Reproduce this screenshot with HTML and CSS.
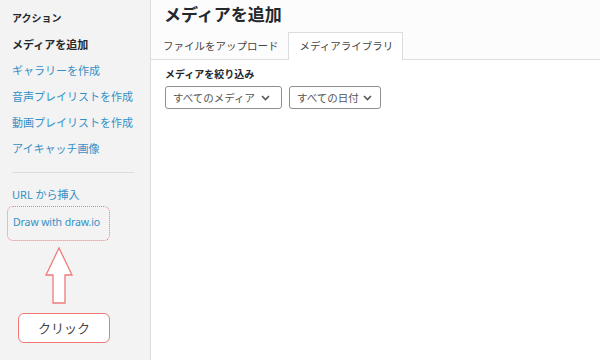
FILE: index.html
```html
<!DOCTYPE html>
<html lang="ja">
<head>
    <meta charset="UTF-8">
    <title>メディアを追加</title>
    <link rel="stylesheet" href="styles.css">
</head>
<body>
    <div class="modal">
        <div class="sidebar">
            <h2 class="menu-title">アクション</h2>
            <ul class="menu">
                <li class="active">メディアを追加</li>
                <li><a href="#">ギャラリーを作成</a></li>
                <li><a href="#">音声プレイリストを作成</a></li>
                <li><a href="#">動画プレイリストを作成</a></li>
                <li><a href="#">アイキャッチ画像</a></li>
            </ul>
            <div class="separator"></div>
            <ul class="menu">
                <li class="url"><a href="#">URL から挿入</a></li>
                <li class="drawio"><a href="#">Draw with draw.io</a></li>
            </ul>

            <!-- annotation -->
            <div class="hint">
                <svg class="arrow" width="30" height="57" viewBox="0 0 30 57">
                    <path d="M15 1 L28 28 L21 28 L21 56 L9 56 L9 28 L2 28 Z" fill="#fff" stroke="#f07a7a" stroke-width="1.3" stroke-linejoin="miter"/>
                </svg>
                <div class="click">クリック</div>
            </div>
        </div>

        <div class="content">
            <div class="header">
                <h1>メディアを追加</h1>
                <div class="tabs">
                    <a class="tab" href="#">ファイルをアップロード</a>
                    <a class="tab active" href="#">メディアライブラリ</a>
                </div>
            </div>
            <div class="toolbar">
                <h3>メディアを絞り込み</h3>
                <div class="filters">
                    <div class="select wide">すべてのメディア
                        <svg width="9" height="6" viewBox="0 0 9 6"><path d="M1 1 L4.5 4.5 L8 1" fill="none" stroke="#555" stroke-width="1.6"/></svg>
                    </div>
                    <div class="select">すべての日付
                        <svg width="9" height="6" viewBox="0 0 9 6"><path d="M1 1 L4.5 4.5 L8 1" fill="none" stroke="#555" stroke-width="1.6"/></svg>
                    </div>
                </div>
            </div>
        </div>
    </div>
</body>
</html>
```

FILE: styles.css
```css
* {
    margin: 0;
    padding: 0;
    box-sizing: border-box;
}

body {
    font-family: "Noto Sans", "Noto Sans CJK JP", sans-serif;
    background: #fff;
    color: #23282d;
}

.modal {
    display: flex;
    width: 600px;
    height: 360px;
    overflow: hidden;
}

/* sidebar */
.sidebar {
    width: 151px;
    flex-shrink: 0;
    background: #f3f3f3;
    border-right: 1px solid #dddddd;
}

.menu-title {
    font-size: 10px;
    font-weight: bold;
    line-height: 26px;
    padding: 5px 12px 0;
}

.menu {
    list-style: none;
    margin-top: 1px;
}

.menu li {
    font-size: 11px;
    line-height: 26px;
    padding: 0 12px;
    white-space: nowrap;
}

.menu li.active {
    font-weight: bold;
    color: #23282d;
}

.menu a {
    color: #3390c6;
    text-decoration: none;
}

.separator {
    height: 1px;
    background: #dcdcdc;
    margin: 10px 16px 0 12px;
}

.menu li.url {
    line-height: 24px;
    margin-top: 10px;
}

.menu li.drawio {
    width: 103px;
    height: 35px;
    margin: -1px 0 0 7px;
    padding: 0 0 0 5px;
    line-height: 30px;
    font-size: 10.5px;
    letter-spacing: -0.1px;
    border: 1px dotted #f07a7a;
    border-radius: 6px;
}

.hint {
    display: flex;
    flex-direction: column;
    align-items: flex-start;
}

.arrow {
    display: block;
    margin: 6px 0 0 44px;
}

.click {
    width: 92px;
    height: 30px;
    margin: 9px 0 0 18px;
    background: #fff;
    border: 1px solid #f07a7a;
    border-radius: 6px;
    font-size: 13px;
    line-height: 28px;
    text-align: center;
    color: #444;
}

/* main */
.content {
    flex: 1;
}

.header {
    background: #fcfcfc;
    border-bottom: 1px solid #dddddd;
    padding-left: 1px;
}

.header h1 {
    font-size: 17px;
    font-weight: bold;
    line-height: 30px;
    height: 32px;
    padding-left: 12px;
}

.tabs {
    display: flex;
}

.tab {
    display: block;
    height: 27px;
    padding: 0 8px 0 10px;
    font-size: 10.5px;
    line-height: 26px;
    color: #444;
    text-decoration: none;
    border: 1px solid transparent;
    border-bottom: none;
    margin-bottom: -1px;
}

.tab.active {
    background: #fff;
    border-color: #dddddd;
    height: 28px;
    padding: 0 9px 0 11px;
}

.toolbar {
    padding: 6px 0 0 14px;
}

.toolbar h3 {
    font-size: 10px;
    font-weight: bold;
    line-height: 16px;
}

.filters {
    display: flex;
    gap: 7px;
    margin-top: 4px;
}

.select {
    display: flex;
    align-items: center;
    justify-content: space-between;
    height: 23px;
    width: 92px;
    padding: 0 8px 0 7px;
    border: 1px solid #8c8f94;
    border-radius: 3px;
    font-size: 10.5px;
    color: #555;
    background: #fff;
}

.select.wide {
    width: 117px;
    padding-right: 11px;
}
```
